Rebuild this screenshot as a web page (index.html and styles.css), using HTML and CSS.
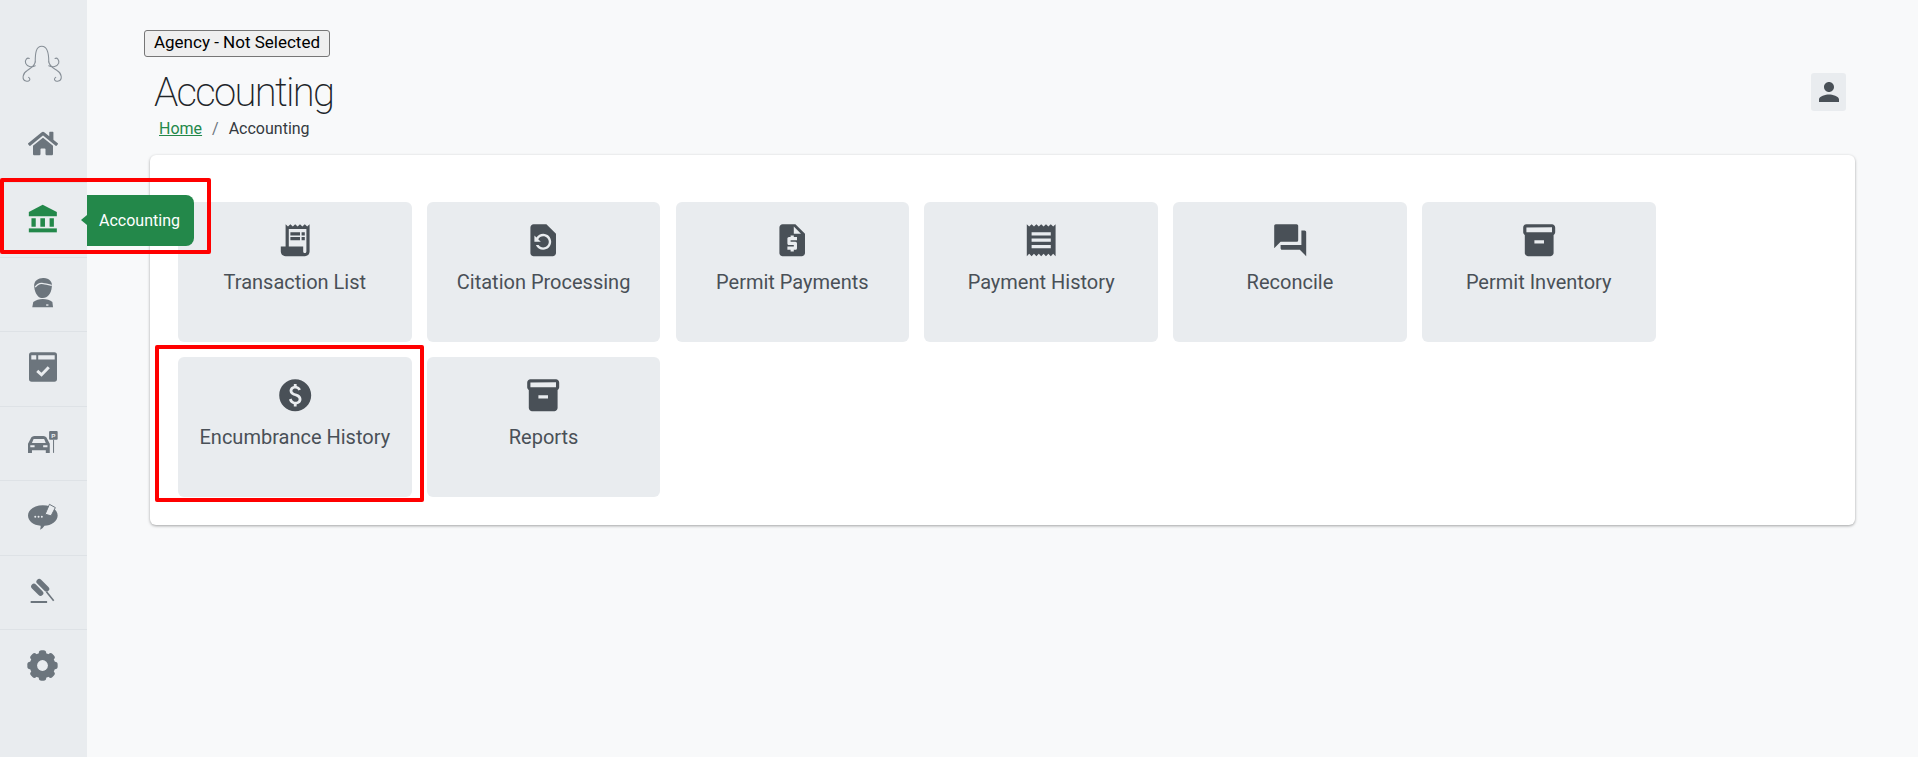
FILE: index.html
```html
<!DOCTYPE html>
<html lang="en">
<head>
<meta charset="utf-8">
<title>Accounting</title>
<link rel="stylesheet" href="styles.css">
</head>
<body>
<div class="app">
  <nav class="sidebar">
    <div class="nav-item nav-logo">
      <svg class="ico-logo" viewBox="65 130 130 125" fill="none" stroke="#868e96" stroke-width="3.2" stroke-linecap="round">
        <path d="M108 186C108 160 110 139 128 139C146 139 149 160 149 186"/>
        <path d="M108 186C106 200 92 206 84 212C70 220 66 240 80 244C90 247 96 238 88 233"/>
        <path d="M149 186C151 200 165 206 174 212C188 220 192 240 178 244C168 247 162 238 170 233"/>
        <path d="M108 198C96 204 84 200 79 190C76 180 84 172 90 176"/>
        <path d="M149 198C161 204 174 200 179 190C181 180 174 172 168 176"/>
      </svg>
    </div>
    <div class="nav-item nav-line">
      <svg class="ico-home" viewBox="0 0 576 512"><path d="M280.37 148.26L96 300.11V464a16 16 0 0 0 16 16l112.06-.29a16 16 0 0 0 15.92-16V368a16 16 0 0 1 16-16h64a16 16 0 0 1 16 16v95.64a16 16 0 0 0 16 16.05L464 480a16 16 0 0 0 16-16V300L295.67 148.26a12.19 12.19 0 0 0-15.3 0zM571.6 251.47L488 182.56V44.05a12 12 0 0 0-12-12h-56a12 12 0 0 0-12 12v72.61L318.47 43a48 48 0 0 0-61 0L4.34 251.47a12 12 0 0 0-1.6 16.9l25.5 31A12 12 0 0 0 45.15 301l235.22-193.74a12.19 12.19 0 0 1 15.3 0L530.9 301a12 12 0 0 0 16.9-1.6l25.5-31a12 12 0 0 0-1.7-16.93z"/></svg>
    </div>
    <div class="nav-item nav-line nav-active">
      <svg class="ico-bank" viewBox="85 606 90 88"><path d="M129 608L172 630V643H87V630Z"/><path d="M95 649H108V675H95ZM122 649H136V675H122ZM150 649H163V675H150Z"/><path d="M87 680H172V692H87Z"/></svg>
      <div class="tooltip">Accounting</div>
    </div>
    <div class="nav-item nav-line">
      <svg class="ico-officer" viewBox="94 48 68 94"><path d="M103 78C100 58 118 50 132 51C148 52 160 62 156 80C154 98 144 112 129 112C115 112 105 98 103 78Z"/><path class="hairline" d="M106 79C113 69 124 66 131 68C140 70 150 70 156 74"/><path d="M97 140L100 124C108 118 118 115 129 115C140 115 152 118 158 124L160 140Z"/><path class="cut" d="M139 131H146V135H139Z"/></svg>
    </div>
    <div class="nav-item nav-line">
      <svg class="ico-calendar" viewBox="86 273 85 89"><rect x="86" y="273" width="85" height="89" rx="8"/><path class="cut" d="M93 282H108V295H93ZM114 282H164V295H114Z"/><path class="cut-line" d="M111 329L124 341L146 318"/></svg>
    </div>
    <div class="nav-item nav-line">
      <svg class="ico-car" viewBox="84 510 91 66"><path d="M84 576V548L92 533C94 528 98 525 104 525H130C136 525 140 528 142 533L150 548V576H138V568H96V576Z"/><path class="cut" d="M96 546L101 534H133L138 546ZM91 553H104V559H91ZM130 553H143V559H130Z"/><rect x="148" y="510" width="26" height="26" rx="3"/><rect x="160" y="536" width="3" height="40"/><text class="car-p" x="161" y="530">P</text></svg>
    </div>
    <div class="nav-item nav-line">
      <svg class="ico-chat" viewBox="84 722 91 85"><path d="M129 732C154 732 174 746 174 763C174 780 154 794 134 794C130 800 126 804 120 806C122 802 123 798 122 794C100 792 84 780 84 763C84 746 104 732 129 732Z"/><path class="pen" d="M136 759L149 729L167 739L154 764Z"/><circle class="cut" cx="106" cy="767" r="3"/><circle class="cut" cx="116" cy="767" r="3"/><circle class="cut" cx="126" cy="767" r="3"/></svg>
    </div>
    <div class="nav-item nav-line">
      <svg class="ico-gavel" viewBox="100 952 76 80"><path class="gavel-bar" d="M112 980L132 1000"/><path class="gavel-bar" d="M128 965L150 987"/><path class="gavel-handle" d="M150 996L172 1023"/><path class="gavel-base" d="M102 1027H152"/></svg>
    </div>
    <div class="nav-item">
      <svg class="ico-gear" viewBox="-46 -46 92 92"><g><rect x="-11" y="-45" width="22" height="90" rx="8"/><rect x="-11" y="-45" width="22" height="90" rx="8" transform="rotate(45)"/><rect x="-11" y="-45" width="22" height="90" rx="8" transform="rotate(90)"/><rect x="-11" y="-45" width="22" height="90" rx="8" transform="rotate(135)"/></g><circle r="38"/><circle class="cut" r="16"/></svg>
    </div>
  </nav>

  <main class="main">
    <header class="page-head">
      <div class="page-head-left">
        <button class="agency-btn" type="button">Agency - Not Selected</button>
        <h1 class="page-title">Accounting</h1>
        <div class="crumbs"><a class="crumb-link" href="#">Home</a><span class="crumb-sep">/</span><span>Accounting</span></div>
      </div>
      <div class="user-btn">
        <svg class="ico-user" viewBox="4 4 16 16"><path d="M12 12c2.21 0 4-1.79 4-4s-1.79-4-4-4-4 1.79-4 4 1.79 4 4 4zm0 2c-2.67 0-8 1.34-8 4v2h16v-2c0-2.66-5.33-4-8-4z"/></svg>
      </div>
    </header>

    <section class="card">
      <a class="tile" href="#">
        <svg class="tile-ico" viewBox="0 0 24 24"><path d="M19.5 3.5 18 2l-1.5 1.5L15 2l-1.5 1.5L12 2l-1.5 1.5L9 2 7.5 3.5 6 2v14H3v3c0 1.66 1.34 3 3 3h12c1.66 0 3-1.34 3-3V2l-1.5 1.5zM19 19c0 .55-.45 1-1 1s-1-.45-1-1v-3H8V5h11v14z"/><path d="M9 7h6v2H9zm7 0h2v2h-2zm-7 3h6v2H9zm7 0h2v2h-2z"/></svg>
        <span class="tile-label">Transaction List</span>
      </a>
      <a class="tile" href="#">
        <svg class="tile-ico" viewBox="0 0 24 24"><path d="M14 2H6c-1.1 0-1.99.9-1.99 2L4 20c0 1.1.89 2 1.99 2H18c1.1 0 2-.9 2-2V8l-6-6zm-2 16c-2.05 0-3.81-1.24-4.58-3h1.71c.63.9 1.68 1.5 2.87 1.5 1.93 0 3.5-1.57 3.5-3.5S13.93 9.5 12 9.5c-1.35 0-2.52.78-3.1 1.9l1.6 1.6h-4V9l1.3 1.3C8.69 8.92 10.23 8 12 8c2.76 0 5 2.24 5 5s-2.24 5-5 5z"/></svg>
        <span class="tile-label">Citation Processing</span>
      </a>
      <a class="tile" href="#">
        <svg class="tile-ico" viewBox="0 0 24 24"><path d="M14 2H6c-1.1 0-1.99.9-1.99 2L4 20c0 1.1.89 2 1.99 2H18c1.1 0 2-.9 2-2V8l-6-6zm1 10h-4v1h3c.55 0 1 .45 1 1v3c0 .55-.45 1-1 1h-1v1h-2v-1H9v-2h4v-1h-3c-.55 0-1-.45-1-1v-3c0-.55.45-1 1-1h1V9h2v1h2v2zm-2-4V3.5L17.5 8H13z"/></svg>
        <span class="tile-label">Permit Payments</span>
      </a>
      <a class="tile" href="#">
        <svg class="tile-ico" viewBox="0 0 24 24"><path d="M18 17H6v-2h12v2zm0-4H6v-2h12v2zm0-4H6V7h12v2zM3 22l1.5-1.5L6 22l1.5-1.5L9 22l1.5-1.5L12 22l1.5-1.5L15 22l1.5-1.5L18 22l1.5-1.5L21 22V2l-1.5 1.5L18 2l-1.5 1.5L15 2l-1.5 1.5L12 2l-1.5 1.5L9 2 7.5 3.5 6 2 4.5 3.5 3 2v20z"/></svg>
        <span class="tile-label">Payment History</span>
      </a>
      <a class="tile" href="#">
        <svg class="tile-ico" viewBox="0 0 24 24"><path d="M21 6h-2v9H6v2c0 .55.45 1 1 1h11l4 4V7c0-.55-.45-1-1-1zm-4 6V3c0-.55-.45-1-1-1H3c-.55 0-1 .45-1 1v14l4-4h10c.55 0 1-.45 1-1z"/></svg>
        <span class="tile-label">Reconcile</span>
      </a>
      <a class="tile" href="#">
        <svg class="tile-ico" viewBox="0 0 24 24"><path d="M20 2H4c-1 0-2 .9-2 2v3.01c0 .72.43 1.34 1 1.69V20c0 1.1 1.1 2 2 2h14c.9 0 2-.9 2-2V8.7c.57-.35 1-.97 1-1.69V4c0-1.1-1-2-2-2zm-5 12H9v-2h6v2zm5-7H4V4l16-.02V7z"/></svg>
        <span class="tile-label">Permit Inventory</span>
      </a>
      <a class="tile" href="#">
        <svg class="tile-ico" viewBox="0 0 24 24"><path d="M12 2C6.48 2 2 6.48 2 12s4.48 10 10 10 10-4.48 10-10S17.52 2 12 2zm.88 15.76V19h-1.75v-1.29c-.74-.18-2.38-.77-3.01-2.96l1.65-.67c.06.22.58 2.09 2.4 2.09.93 0 1.98-.48 1.98-1.61 0-.96-.7-1.46-2.28-2.03-1.1-.39-3.35-1.03-3.35-3.31 0-.1.01-2.4 2.62-2.96V5h1.75v1.24c1.84.32 2.51 1.79 2.66 2.23l-1.58.67c-.11-.35-.59-1.34-1.9-1.34-.7 0-1.81.37-1.81 1.39 0 .95.86 1.31 2.64 1.9 2.4.83 3.01 2.05 3.01 3.45 0 2.63-2.5 3.13-3.03 3.22z"/></svg>
        <span class="tile-label">Encumbrance History</span>
      </a>
      <a class="tile" href="#">
        <svg class="tile-ico" viewBox="0 0 24 24"><path d="M20 2H4c-1 0-2 .9-2 2v3.01c0 .72.43 1.34 1 1.69V20c0 1.1 1.1 2 2 2h14c.9 0 2-.9 2-2V8.7c.57-.35 1-.97 1-1.69V4c0-1.1-1-2-2-2zm-5 12H9v-2h6v2zm5-7H4V4l16-.02V7z"/></svg>
        <span class="tile-label">Reports</span>
      </a>
    </section>
  </main>
</div>
<div class="mark mark-nav"></div>
<div class="mark mark-tile"></div>
</body>
</html>
```

FILE: styles.css
```css
* { box-sizing: border-box; }
html, body { height: 100%; }
body {
  margin: 0;
  background: #f8f9fa;
  color: #212529;
  font-family: Roboto, "Liberation Sans", sans-serif;
  font-size: 16px;
  overflow: hidden;
}
.app { display: flex; min-height: 757px; }

/* sidebar */
.sidebar {
  width: 87px;
  flex: none;
  background: #e9ecef;
  padding-top: 34px;
}
.nav-item {
  position: relative;
  height: 74.5px;
  padding: 0 2px 3px 0;
  display: flex;
  align-items: center;
  justify-content: center;
}
.nav-line { border-bottom: 1px solid #dee2e6; }
.nav-item svg { fill: #6c757d; display: block; }
.nav-active svg { fill: #23884a; }
.nav-item svg .cut { fill: #e9ecef; }
.nav-logo { padding-bottom: 14px; }
.ico-logo { width: 43px; height: 42px; }
.nav-item .ico-logo { fill: none; }
.ico-home { width: 30px; height: 27px; }
.ico-bank { width: 30px; height: 29px; }
.ico-officer { width: 23px; height: 31px; }
.ico-calendar { width: 28px; height: 30px; }
.ico-car { width: 30px; height: 22px; }
.ico-chat { width: 30px; height: 28px; }
.ico-gavel { width: 25px; height: 27px; }
.ico-gear { width: 31px; height: 31px; }
.nav-item svg .cut-line { fill: none; stroke: #e9ecef; stroke-width: 9; }
.nav-item svg .hairline { fill: none; stroke: #e9ecef; stroke-width: 4; }
.nav-item svg .pen { fill: #e9ecef; stroke: #6c757d; stroke-width: 3; stroke-linejoin: round; }
.nav-item svg .car-p { font: 700 19px "Liberation Sans", sans-serif; fill: #e9ecef; text-anchor: middle; }
.nav-item svg .gavel-bar { fill: none; stroke: #6c757d; stroke-width: 17; stroke-linecap: round; }
.nav-item svg .gavel-handle { fill: none; stroke: #6c757d; stroke-width: 5; }
.nav-item svg .gavel-base { fill: none; stroke: #6c757d; stroke-width: 6; }

.tooltip {
  position: absolute;
  z-index: 3;
  left: 87px;
  top: 12px;
  width: 107px;
  height: 51px;
  padding-right: 2px;
  display: flex;
  align-items: center;
  justify-content: center;
  background: #23884a;
  color: #fff;
  font-size: 16px;
  border-radius: 0 8px 8px 0;
}
.tooltip::before {
  content: "";
  position: absolute;
  left: -6px;
  top: 20px;
  border-style: solid;
  border-width: 5.5px 6px 5.5px 0;
  border-color: transparent #23884a transparent transparent;
}

/* main */
.main {
  flex: 1;
  min-width: 0;
  padding: 30px 63px 0 57px;
}
.page-head { display: flex; justify-content: space-between; align-items: flex-start; }
.page-head-left { display: flex; flex-direction: column; align-items: flex-start; }
.agency-btn {
  height: 27px;
  width: 186px;
  padding: 0 0 3px;
  background: #efefef;
  border: 1px solid #767676;
  border-radius: 3px;
  color: #000;
  font: 400 17px Roboto, sans-serif;
}
.page-title {
  margin: 12px 0 0 10px;
  font-size: 40px;
  font-weight: 200;
  letter-spacing: -1.7px;
  line-height: 48px;
  color: #212529;
}
.crumbs {
  margin: 0 0 0 15px;
  line-height: 24px;
  font-size: 16px;
  color: #343a40;
}
.crumb-link { color: #23884a; text-decoration: underline; }
.crumb-sep { color: #6c757d; padding: 0 10px; }
.user-btn {
  margin: 43px 9px 0 0;
  width: 35px;
  height: 38px;
  background: #e9ecef;
  border-radius: 3px;
  display: flex;
  align-items: center;
  justify-content: center;
}
.ico-user { width: 20px; height: 20px; fill: #495057; display: block; }

.card {
  margin: 14px 0 0 6px;
  height: 370px;
  background: #fff;
  border-radius: 6px;
  box-shadow: 0 1px 3px rgba(0, 0, 0, .35);
  padding: 47px 28px 28px;
  display: grid;
  grid-template-columns: repeat(6, 233.6px);
  grid-auto-rows: 140px;
  column-gap: 15.2px;
  row-gap: 15px;
}
.tile {
  background: #e9ecef;
  border-radius: 6px;
  padding-top: 19px;
  display: flex;
  flex-direction: column;
  align-items: center;
  color: #495057;
  text-decoration: none;
}
.tile-ico { width: 38.4px; height: 38.4px; fill: #495057; display: block; flex: none; }
.tile-label { margin-top: 10px; font-size: 20px; line-height: 27px; }

/* red annotation frames drawn over the screenshot */
.mark {
  position: absolute;
  z-index: 5;
  border: 4px solid #ff0000;
  border-radius: 2px;
  pointer-events: none;
}
.mark-nav { left: 0; top: 178px; width: 211px; height: 76px; }
.mark-tile { left: 155px; top: 345px; width: 269px; height: 157px; }
```
